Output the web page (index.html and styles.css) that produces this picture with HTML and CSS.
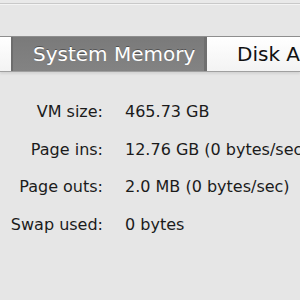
FILE: index.html
```html
<!DOCTYPE html>
<html lang="en">
<head>
  <meta charset="UTF-8">
  <meta name="viewport" content="width=device-width, initial-scale=1.0">
  <title>Memory</title>
  <link rel="stylesheet" href="styles.css">
</head>
<body>
  <!-- Window top edge -->
  <div class="top-edge"></div>

  <!-- Tabs -->
  <div class="tabs">
    <div class="tab tab-clipped"></div>
    <div class="tab tab-selected">System Memory</div>
    <div class="tab">Disk Activity</div>
  </div>
  <!-- End Tabs -->

  <div class="stats">
    <span class="label">VM size:</span>
    <span class="value">465.73 GB</span>
    <span class="label">Page ins:</span>
    <span class="value">12.76 GB (0 bytes/sec)</span>
    <span class="label">Page outs:</span>
    <span class="value">2.0 MB (0 bytes/sec)</span>
    <span class="label">Swap used:</span>
    <span class="value">0 bytes</span>
  </div>
</body>
</html>
```

FILE: styles.css
```css
body {
  font-family: "DejaVu Sans", "Liberation Sans", sans-serif;
  background-color: #e6e6e6;
  color: #1b1b1b;
  margin: 0;
  width: 300px;
  height: 300px;
  overflow: hidden;
}

/* Top edge */
.top-edge {
  height: 3px;
  background: #e9e9e9;
  border-bottom: 1px solid #c9c9c9;
  box-shadow: 0 1px 0 #f4f4f4;
}

/* Tabs */
.tabs {
  display: flex;
  margin-top: 32px;
  height: 34px;
  border-top: 1px solid #8e8e8e;
  border-bottom: 1px solid #a0a0a0;
  box-shadow: 0 2px 2px rgba(0, 0, 0, 0.08);
  background: #fff;
}
.tab {
  flex: 1;
  display: flex;
  align-items: center;
  padding-left: 30px;
  font-size: 20px;
  white-space: nowrap;
  overflow: hidden;
  background: linear-gradient(#ffffff, #f3f3f3);
  color: #111;
}
.tab-clipped {
  flex: none;
  width: 11px;
  padding-left: 0;
  border-right: 2px solid #6d6d6d;
}
.tab-selected {
  flex: none;
  width: 171px;
  padding-left: 20px;
  background: linear-gradient(#7a7a7a, #838383);
  color: #fff;
  text-shadow: 0 -1px 0 rgba(0, 0, 0, 0.35);
  border-right: 3px solid #6f6f6f;
}
/* End Tabs */

.stats {
  display: grid;
  grid-template-columns: 103px auto;
  column-gap: 22px;
  row-gap: 17.7px;
  margin-top: 30px;
  font-size: 16px;
  line-height: 20px;
}
.label {
  text-align: right;
}
.value {
  white-space: nowrap;
}
```
